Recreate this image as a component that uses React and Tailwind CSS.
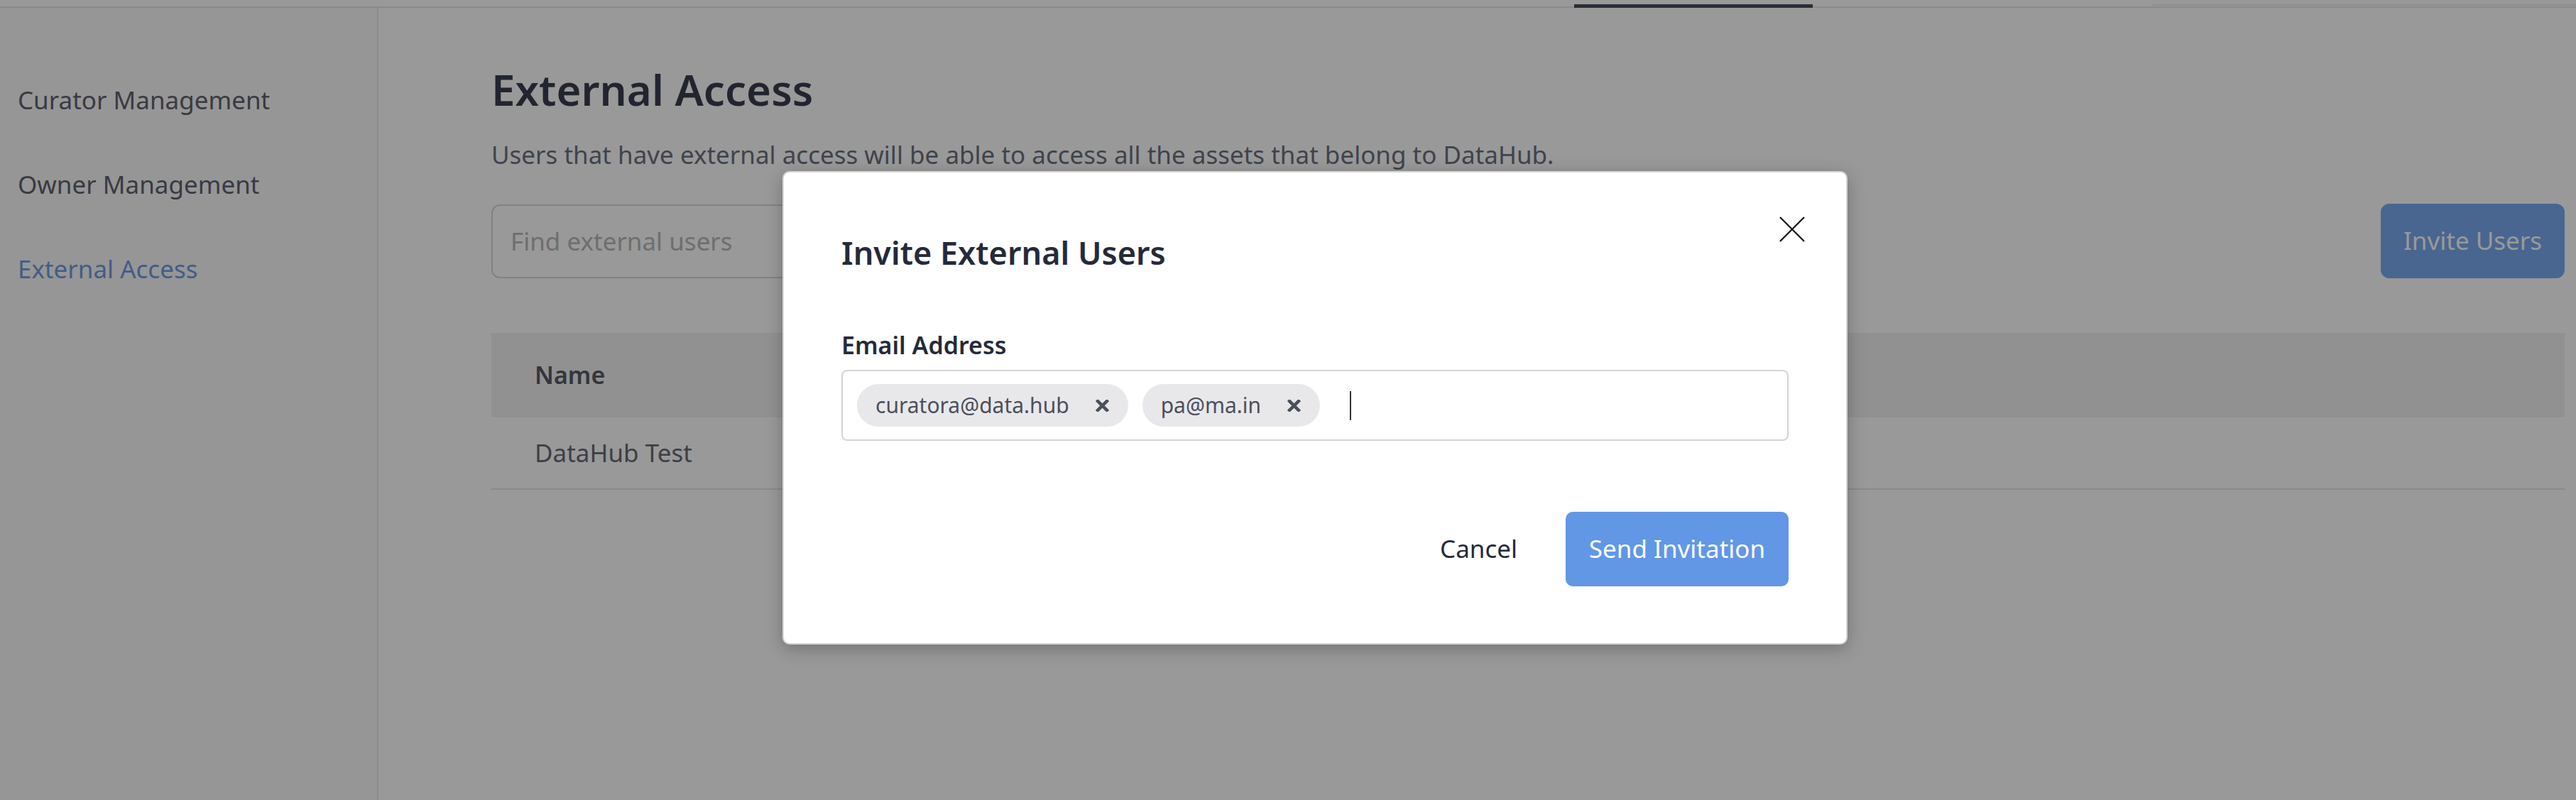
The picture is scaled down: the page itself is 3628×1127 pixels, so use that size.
import React from 'react';

const ChipX = () => (
  <svg width="19" height="17" viewBox="0 0 19 17" className="shrink-0">
    <path d="M1.5 0.5 L17.5 16.5 M17.5 0.5 L1.5 16.5" stroke="#4b4f5c" strokeWidth="4.5" fill="none" />
  </svg>
);

const Chip = ({ label }) => (
  <div className="flex h-[60px] items-center gap-[37px] rounded-full bg-[#e8e8eb] pl-[26px] pr-[27px]">
    <span className="text-[30px] leading-none text-[#4b4f5c]">{label}</span>
    <ChipX />
  </div>
);

const App = () => {
  return (
    <div className="relative h-[1127px] w-[3628px] overflow-hidden bg-white font-['Noto_Sans',sans-serif]">
      {/* tab strip remnants */}
      <div className="flex h-[11px] items-end">
        <div className="h-[2px] w-[2217px] bg-[#e6e6e6]" />
        <div className="h-[5px] w-[336px] bg-[#464b5d]" />
        <div className="h-[2px] w-[479px] bg-[#e6e6e6]" />
        <div className="h-[5px] flex-1 border-t-2 border-b-2 border-t-[#ececec] border-b-[#e6e6e6]" />
      </div>

      <div className="flex h-[1116px]">
        {/* Sidebar */}
        <aside className="w-[533px] shrink-0 border-r-2 border-[#e8e8e8] bg-[#fafafa] pl-[25px] pt-[106px]">
          <div className="flex flex-col gap-[71px] text-[35px] leading-[48px]">
            <div className="text-[#5f6270]">Curator Management</div>
            <div className="text-[#5f6270]">Owner Management</div>
            <div className="text-[#6f9be0]">External Access</div>
          </div>
        </aside>

        {/* Main */}
        <main className="flex-1 pl-[159px] pr-[16px] pt-[75px]">
          <h1 className="text-[60px] font-semibold leading-[80px] text-[#3a3f4f]">External Access</h1>
          <p className="mt-[28px] text-[35px] leading-[48px] text-[#6b7080]">
            Users that have external access will be able to access all the assets that belong to DataHub.
          </p>

          <div className="mt-[45px] flex items-center">
            <input
              placeholder="Find external users"
              className="h-[104px] w-[1000px] rounded-[12px] border-2 border-[#d9d9d9] bg-white pl-[25px] text-[35px] text-[#5f6270] outline-none placeholder:text-[#b8b8b8]"
            />
            <button className="ml-auto h-[105px] w-[259px] rounded-[12px] bg-[#7baaf0] text-[35px] text-white">
              Invite Users
            </button>
          </div>

          <div className="mt-[77px]">
            <div className="flex h-[119px] items-center bg-[#f2f2f2] pl-[61px]">
              <span className="text-[34px] font-semibold text-[#555a68]">Name</span>
            </div>
            <div className="flex h-[102px] items-center border-b-2 border-[#e6e6e6] pl-[61px]">
              <span className="text-[35px] text-[#666a77]">DataHub Test</span>
            </div>
          </div>
        </main>
      </div>

      {/* Modal overlay */}
      <div className="absolute inset-0 bg-black/40 pl-[1102px] pt-[241px]">
        <div className="relative h-[667px] w-[1500px] rounded-[10px] border-2 border-[#d6d6d6] bg-white px-[81px] pt-[83px] shadow-[0_6px_24px_rgba(0,0,0,0.25)]">
          <button className="absolute right-[58px] top-[62px]">
            <svg width="36" height="36" viewBox="0 0 36 36">
              <path d="M1 1 L35 35 M35 1 L1 35" stroke="#111" strokeWidth="2.2" fill="none" />
            </svg>
          </button>

          <h2 className="text-[45px] font-semibold leading-[60px] text-[#252a3a]">Invite External Users</h2>

          <div className="mt-[77px] text-[34px] font-semibold leading-[46px] text-[#252a3a]">Email Address</div>
          <div className="mt-[12px] flex h-[100px] items-center gap-[20px] rounded-[8px] border-2 border-[#d4d4d8] pl-[20px]">
            <Chip label="curatora@data.hub" />
            <Chip label="pa@ma.in" />
            <div className="ml-[22px] h-[41px] w-[2px] bg-[#333]" />
          </div>

          <div className="mt-[100px] flex items-center justify-end">
            <button className="mr-[68px] text-[35px] text-[#252a3a]">Cancel</button>
            <button className="h-[105px] w-[314px] rounded-[10px] bg-[#6297e6] text-[35px] text-white">
              Send Invitation
            </button>
          </div>
        </div>
      </div>
    </div>
  );
};

export default App;
